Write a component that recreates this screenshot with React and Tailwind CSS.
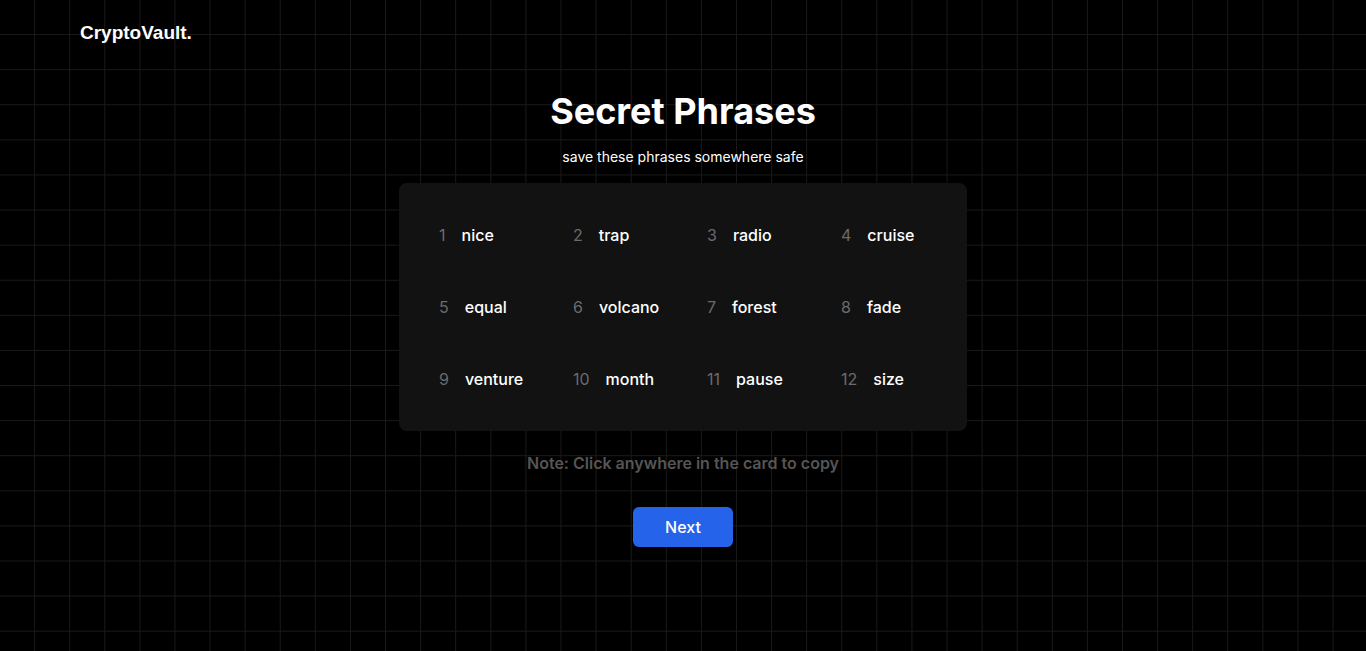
import React from "react";

const words = ["nice","trap","radio","cruise","equal","volcano","forest","fade","venture","month","pause","size"];

export default function App() {
  return (
    <div className="min-h-[651px] w-full bg-black text-white font-['Inter',sans-serif] bg-[linear-gradient(to_right,#1a1a1a_1px,transparent_1px),linear-gradient(to_bottom,#1a1a1a_1px,transparent_1px)] bg-[size:35.1px_35.1px] bg-[position:-1px_-1px]">
      <header className="px-20 pt-[22px] h-[66px]">
        <div className="text-[19px] font-bold leading-[22px] font-['Liberation_Sans',Arial,sans-serif]">CryptoVault.</div>
      </header>
      <main className="flex flex-col items-center">
        <h1 className="text-[36px] font-bold leading-[44px] mt-[23px]">Secret Phrases</h1>
        <p className="text-[14px] font-normal leading-5 mt-[14px]">save these phrases somewhere safe</p>
        <div className="mt-4 w-[568px] rounded-lg bg-[#121212] py-4 pl-10 grid grid-cols-[134px_134px_134px_1fr]">
          {words.map((w, i) => (
            <div key={i} className="flex items-center gap-4 py-6 leading-6 text-[16px]">
              <span className="text-[#6b6b6b]">{i + 1}</span>
              <span className="font-medium">{w}</span>
            </div>
          ))}
        </div>
        <p className="mt-[20px] text-[16px] font-semibold text-[#555555] leading-6">Note: Click anywhere in the card to copy</p>
        <button className="mt-[32px] w-[100px] h-10 rounded-md bg-[#2563eb] text-white text-[16px] font-medium">Next</button>
      </main>
    </div>
  );
}
